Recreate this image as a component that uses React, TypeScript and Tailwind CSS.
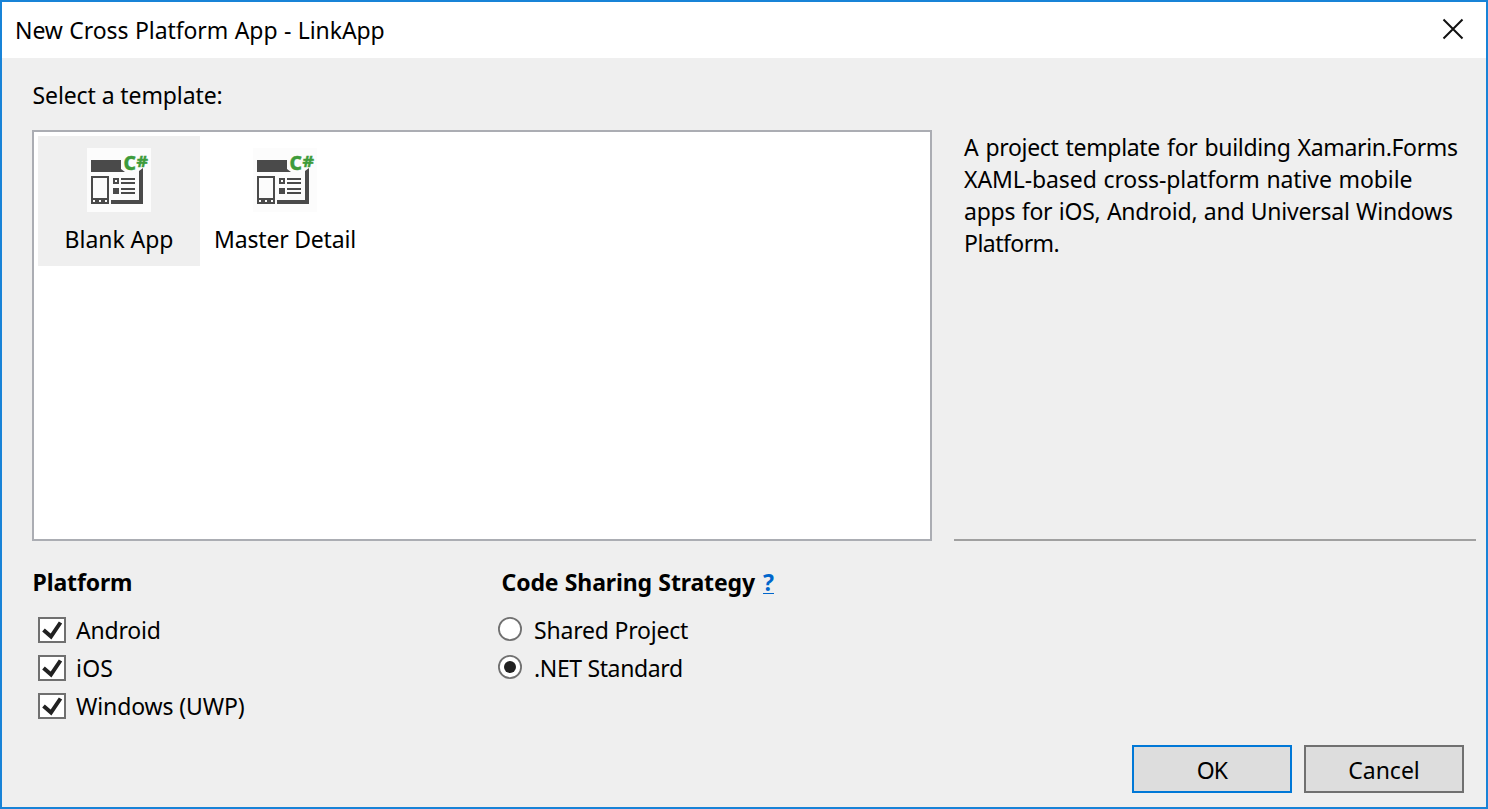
import React from 'react';

function TemplateIcon() {
  return (
    <svg width="64" height="64" viewBox="0 0 64 64" className="block shrink-0">
      <rect width="64" height="64" fill="#fcfcfc" />
      <g fill="#4a4a4a">
        <path d="M4 12H34V21L38 24H4Z" />
        <path fillRule="evenodd" d="M4 28H22V56H4ZM6 30V50H20V30ZM6 52V54H8V52ZM12 52V54H14V52ZM18 52V54H20V52Z" />
        <path d="M52 23L56 20V56H24V52H52Z" />
        <path fillRule="evenodd" d="M26 30H32V36H26ZM28 32V34H30V32Z" />
        <path d="M34 30H48V32H34ZM34 34H48V36H34ZM26 40H32V46H26ZM34 40H48V42H34ZM34 44H48V46H34Z" />
      </g>
      <text x="36.5" y="22" fontSize="19" fontWeight="800" fill="#3d9b3a" stroke="#3d9b3a" strokeWidth="0.4" fontFamily="Noto Sans, sans-serif" textLength="12.5" lengthAdjust="spacingAndGlyphs">C</text>
      <text x="49.5" y="18.5" fontSize="15" fontWeight="800" fill="#3d9b3a" stroke="#3d9b3a" strokeWidth="0.3" fontFamily="Noto Sans, sans-serif" textLength="11.5" lengthAdjust="spacingAndGlyphs">#</text>
    </svg>
  );
}

function Template({ selected, children }: { selected?: boolean; children: React.ReactNode }) {
  return (
    <div className={`flex h-[130px] w-[162px] flex-col items-center pt-3 ${selected ? 'bg-[#efefef]' : ''}`}>
      <TemplateIcon />
      <div className="mt-[11px]">{children}</div>
    </div>
  );
}

function CheckRow({ children }: { children: React.ReactNode }) {
  return (
    <label className="flex h-[38px] items-center">
      <span className="mr-[10px] flex h-[26px] w-7 items-center justify-center border-2 border-[#707070] bg-white">
        <svg width="24" height="22" viewBox="0 0 24 22">
          <path d="M3.5 11L11 17.5L20.5 3.5" fill="none" stroke="#212121" strokeWidth="4" />
        </svg>
      </span>
      {children}
    </label>
  );
}

function RadioRow({ checked, children }: { checked?: boolean; children: React.ReactNode }) {
  return (
    <label className="flex h-[38px] items-center">
      <svg width="24" height="24" viewBox="0 0 24 24" className="mr-[12px] mb-[2px] shrink-0">
        <circle cx="12" cy="12" r="11.1" fill="#fff" stroke="#707070" strokeWidth="1.8" />
        {checked && <circle cx="12" cy="12" r="6" fill="#212121" />}
      </svg>
      {children}
    </label>
  );
}

export default function App() {
  return (
    <div className="flex h-[809px] w-[1488px] flex-col overflow-hidden border-2 border-[#1883d7] bg-[#efefef] font-['Noto_Sans',sans-serif] text-[23px] leading-8 whitespace-nowrap text-black">
      <header className="flex h-14 shrink-0 items-center justify-between bg-white pr-[22px] pl-[13px]">
        <span className="tracking-[-0.08px] [word-spacing:0.6px]">New Cross Platform App - LinkApp</span>
        <svg width="22" height="22" viewBox="0 0 22 22" className="mb-[2px]">
          <path d="M1.5 1.5L20.5 20.5M20.5 1.5L1.5 20.5" stroke="#111" strokeWidth="2" />
        </svg>
      </header>

      <div className="mt-[21px] pl-[30.5px] tracking-[-0.1px]">Select a template:</div>

      <main className="mt-[19px] flex h-[411px] shrink-0 pl-[30px]">
        <section className="flex w-[900px] gap-1 border-2 border-[#abadb3] bg-white p-1">
          <Template selected>
            <span className="tracking-[-0.05px]">Blank App</span>
          </Template>
          <Template>
            <span className="tracking-[-0.2px]">Master Detail</span>
          </Template>
        </section>
        <aside className="ml-[22px] w-[522px] border-b-2 border-[#a0a0a0] pt-[1px] pl-[10px]">
          <p className="tracking-[-0.34px] [word-spacing:1.5px]">A project template for building Xamarin.Forms</p>
          <p className="tracking-[-0.1px] [word-spacing:0.9px]">XAML-based cross-platform native mobile</p>
          <p className="tracking-[-0.22px] [word-spacing:0.6px]">apps for iOS, Android, and Universal Windows</p>
          <p className="tracking-[-0.54px]">Platform.</p>
        </aside>
      </main>

      <div className="mt-[25px] flex">
        <section className="w-[496px] pl-[30px]">
          <h2 className="pl-[0.5px] font-bold tracking-[-0.12px]">Platform</h2>
          <div className="mt-[13px] pl-[6px]">
            <CheckRow><span className="tracking-[-0.2px]">Android</span></CheckRow>
            <CheckRow><span className="tracking-[0.2px]">iOS</span></CheckRow>
            <CheckRow><span className="tracking-[-0.12px]">Windows (UWP)</span></CheckRow>
          </div>
        </section>
        <section>
          <h2 className="flex pl-[3.5px] font-bold">
            <span className="tracking-[-0.121px] [word-spacing:0.5px]">Code Sharing Strategy</span>
            <a className="ml-[8px] h-7 border-b border-[#0066cc] text-[#0066cc]">?</a>
          </h2>
          <div className="mt-[13px]">
            <RadioRow><span className="tracking-[-0.2px]">Shared Project</span></RadioRow>
            <RadioRow checked><span className="tracking-[-0.361px]">.NET Standard</span></RadioRow>
          </div>
        </section>
      </div>

      <footer className="mt-auto mr-[22px] mb-[14px] flex justify-end gap-3">
        <button className="h-12 w-40 border-2 border-[#0078d7] bg-[#dddddd] pt-[2px] tracking-[-0.9px]">OK</button>
        <button className="h-12 w-40 border-2 border-[#707070] bg-[#dddddd] pt-[2px]">Cancel</button>
      </footer>
    </div>
  );
}
